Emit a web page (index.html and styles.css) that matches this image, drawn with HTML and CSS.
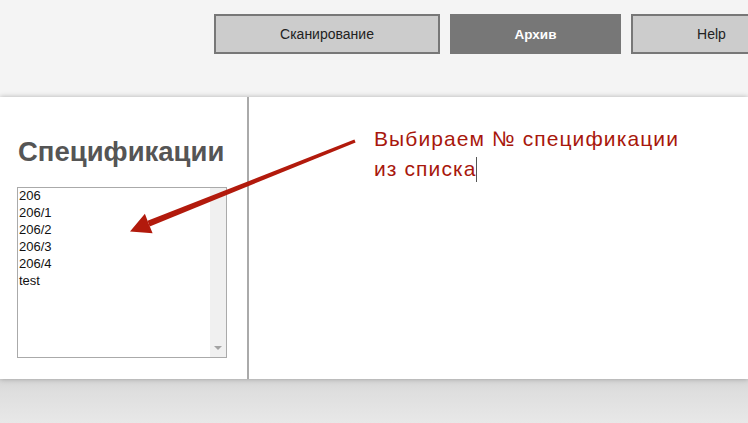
FILE: index.html
```html
<!DOCTYPE html>
<html lang="ru">
<head>
<meta charset="utf-8">
<title>Спецификации</title>
<link rel="stylesheet" href="styles.css">
</head>
<body>
<div class="page">
  <header class="topbar">
    <nav class="menu">
      <button class="btn">Сканирование</button>
      <button class="btn btn-active">Архив</button>
      <button class="btn btn-help">Help</button>
    </nav>
  </header>
  <main class="panel">
    <section class="sidebar">
      <h1 class="title">Спецификации</h1>
      <div class="listbox">
        <ul class="items">
          <li>206</li>
          <li>206/1</li>
          <li>206/2</li>
          <li>206/3</li>
          <li>206/4</li>
          <li>test</li>
        </ul>
        <div class="scrolltrack"><span class="scrollarrow"></span></div>
      </div>
    </section>
    <section class="content">
      <p class="note">Выбираем № спецификации<br>из списка<span class="caret"></span></p>
    </section>
  </main>
  <div class="footer"></div>
  <svg class="arrow" width="748" height="423" viewBox="0 0 748 423">
    <polygon fill="#b21a0c" points="355.6,142.4 354.4,139.6 147.5,220.8 149.7,226.4"/>
    <polygon fill="#b21a0c" points="130,231.5 144.9,213.8 148.6,223.6 152.6,233.2"/>
  </svg>
</div>
</body>
</html>
```

FILE: styles.css
```css
html, body {
  margin: 0;
  padding: 0;
}
body {
  width: 748px;
  height: 423px;
  overflow: hidden;
  font-family: "Liberation Sans", Arial, sans-serif;
  background: #f4f4f4;
}
.page {
  position: relative;
  width: 748px;
  height: 423px;
  display: flex;
  flex-direction: column;
  overflow: hidden;
}
.topbar {
  height: 97px;
  flex: none;
  background: #f4f4f4;
}
.menu {
  display: flex;
  padding: 14px 0 0 214px;
  white-space: nowrap;
}
.btn {
  flex: none;
  box-sizing: border-box;
  height: 40px;
  width: 226px;
  border: 2px solid #777;
  background: #cccccc;
  color: #222;
  font-family: "Liberation Sans", Arial, sans-serif;
  font-size: 14px;
  padding: 0;
  margin: 0;
}
.btn-active {
  width: 171px;
  margin-left: 10px;
  background: #777;
  border-color: #777;
  color: #fff;
  font-weight: bold;
  font-size: 13.5px;
}
.btn-help {
  width: 161px;
  margin-left: 10px;
}
.panel {
  flex: none;
  height: 282px;
  background: #fff;
  display: flex;
  box-shadow: 0 0 5px rgba(0, 0, 0, 0.28);
  position: relative;
  z-index: 1;
}
.sidebar {
  flex: none;
  box-sizing: border-box;
  border-right: 2px solid #aaa;
  padding: 39px 0 0 17px;
  width: 249px;
}
.title {
  margin: 0 0 0 1px;
  font-size: 27.5px;
  font-weight: bold;
  color: #555;
  line-height: 32px;
  height: 51px;
}
.listbox {
  box-sizing: border-box;
  width: 210px;
  height: 171px;
  border: 1px solid #aaa;
  display: flex;
  background: #fff;
}
.items {
  list-style: none;
  margin: 0;
  padding: 0 0 0 1px;
  flex: 1;
  font-size: 13px;
  line-height: 17px;
  color: #111;
  margin-top: -1px;
}
.scrolltrack {
  width: 16px;
  flex: none;
  background: #f0f0f0;
  display: flex;
  align-items: flex-end;
  justify-content: center;
  padding-bottom: 7px;
  box-sizing: border-box;
}
.scrollarrow {
  width: 0;
  height: 0;
  border-left: 4px solid transparent;
  border-right: 4px solid transparent;
  border-top: 4px solid #a3a3a3;
}
.content {
  flex: 1;
  padding: 27px 0 0 125px;
}
.note {
  margin: 0;
  font-size: 21px;
  line-height: 30px;
  letter-spacing: 1.1px;
  color: #a8170c;
}
.caret {
  display: inline-block;
  width: 1px;
  height: 25px;
  background: #555;
  vertical-align: -6px;
  margin-left: -1px;
}
.footer {
  flex: 1;
  background: linear-gradient(#d6d6d6 0px, #dedede 12px, #e8e8e8 44px);
}
.arrow {
  position: absolute;
  left: 0;
  top: 0;
  z-index: 2;
  pointer-events: none;
}
```
